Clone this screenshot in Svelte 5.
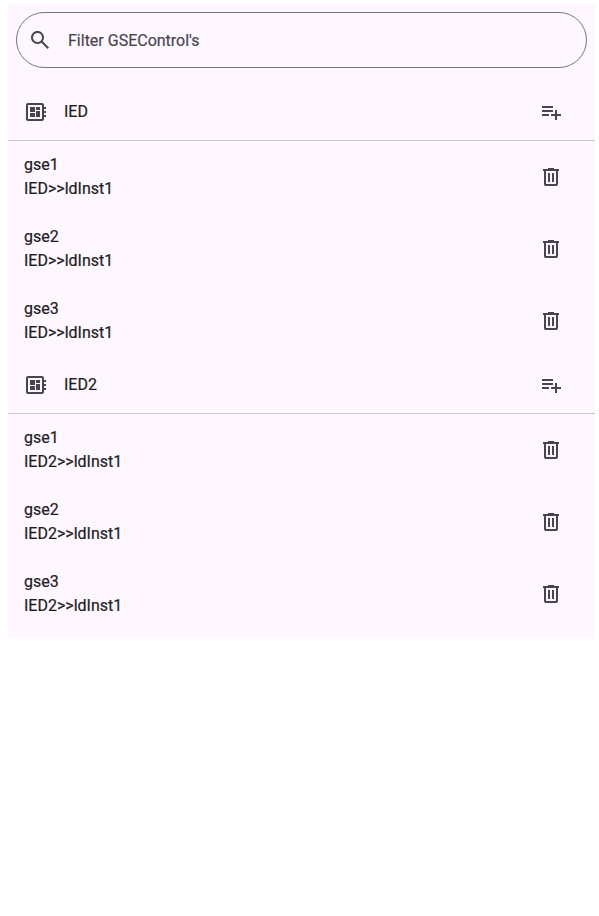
<script>
  const groups = ['IED', 'IED2'].map((name) => ({
    name,
    controls: ['gse1', 'gse2', 'gse3'],
  }));
</script>

<main>
  <label class="search">
    <svg viewBox="0 0 24 24"><path d="m19.6 21-6.3-6.3A6.096 6.096 0 0 1 9.5 16c-1.817 0-3.354-.63-4.612-1.887C3.629 12.854 3 11.317 3 9.5c0-1.817.63-3.354 1.888-4.612C6.146 3.629 7.683 3 9.5 3c1.817 0 3.354.63 4.613 1.888C15.37 6.146 16 7.683 16 9.5a6.096 6.096 0 0 1-1.3 3.8l6.3 6.3-1.4 1.4ZM9.5 14c1.25 0 2.313-.438 3.188-1.312C13.563 11.813 14 10.75 14 9.5s-.437-2.313-1.312-3.188C11.813 5.437 10.75 5 9.5 5s-2.313.437-3.188 1.312C5.437 7.187 5 8.25 5 9.5s.437 2.313 1.312 3.188C7.187 13.563 8.25 14 9.5 14Z" /></svg>
    <input placeholder="Filter GSEControl's" />
  </label>

  {#each groups as group}
    <section>
      <header>
        <svg viewBox="0 0 24 24"><path d="M22 9V7h-2V5c0-1.1-.9-2-2-2H4c-1.1 0-2 .9-2 2v14c0 1.1.9 2 2 2h14c1.1 0 2-.9 2-2v-2h2v-2h-2v-2h2v-2h-2V9h2zm-4 10H4V5h14v14zM6 13h5v4H6zm6-6h4v3h-4zM6 7h5v5H6zm6 4h4v6h-4z" /></svg>
        <span class="name">{group.name}</span>
        <button aria-label="Add control">
          <svg viewBox="0 0 24 24"><path d="M14 10H3v2h11v-2zm0-4H3v2h11V6zm4 8v-4h-2v4h-4v2h4v4h2v-4h4v-2h-4zM3 16h7v-2H3v2z" /></svg>
        </button>
      </header>
      <ul>
        {#each group.controls as control}
          <li>
            <div class="text">
              <span>{control}</span>
              <span>{group.name}&gt;&gt;ldInst1</span>
            </div>
            <button aria-label="Remove control">
              <svg viewBox="0 0 24 24"><path d="M7 21c-.55 0-1.02-.196-1.412-.587A1.926 1.926 0 0 1 5 19V6H4V4h5V3h6v1h5v2h-1v13c0 .55-.196 1.02-.587 1.413A1.926 1.926 0 0 1 17 21H7ZM17 6H7v13h10V6ZM9 17h2V8H9v9Zm4 0h2V8h-2v9Z" /></svg>
            </button>
          </li>
        {/each}
      </ul>
    </section>
  {/each}
</main>

<style>
  :global(body) {
    background: #fff;
  }
  main {
    box-sizing: border-box;
    width: 587px;
    margin: 4px 0 0 8px;
    padding: 8px 0;
    background: #fef7ff;
    color: #1d1b20;
    font: 400 16px/24px Roboto, sans-serif;
    -webkit-text-stroke: 0.2px;
  }
  svg {
    display: block;
    flex: none;
    width: 24px;
    height: 24px;
    fill: #49454f;
  }
  .search {
    box-sizing: border-box;
    display: flex;
    align-items: center;
    gap: 16px;
    height: 56px;
    margin: 0 8px 16px;
    padding: 0 11px;
    border: 1px solid #79747e;
    border-radius: 28px;
  }
  input {
    flex: 1;
    min-width: 0;
    padding: 2px 0 0;
    border: 0;
    outline: 0;
    background: none;
    color: #1d1b20;
    font: inherit;
  }
  input::placeholder {
    color: #49454f;
    opacity: 1;
  }
  header {
    display: flex;
    align-items: center;
    gap: 16px;
    height: 56px;
    padding: 0 24px 0 16px;
    border-bottom: 1px solid #cac4d0;
  }
  .name {
    flex: 1;
  }
  button {
    padding: 8px;
    border: 0;
    background: none;
  }
  ul {
    margin: 0;
    padding: 0;
    list-style: none;
  }
  li {
    box-sizing: border-box;
    display: flex;
    align-items: center;
    height: 72px;
    padding: 0 24px 0 16px;
  }
  .text {
    display: flex;
    flex: 1;
    flex-direction: column;
  }
</style>
